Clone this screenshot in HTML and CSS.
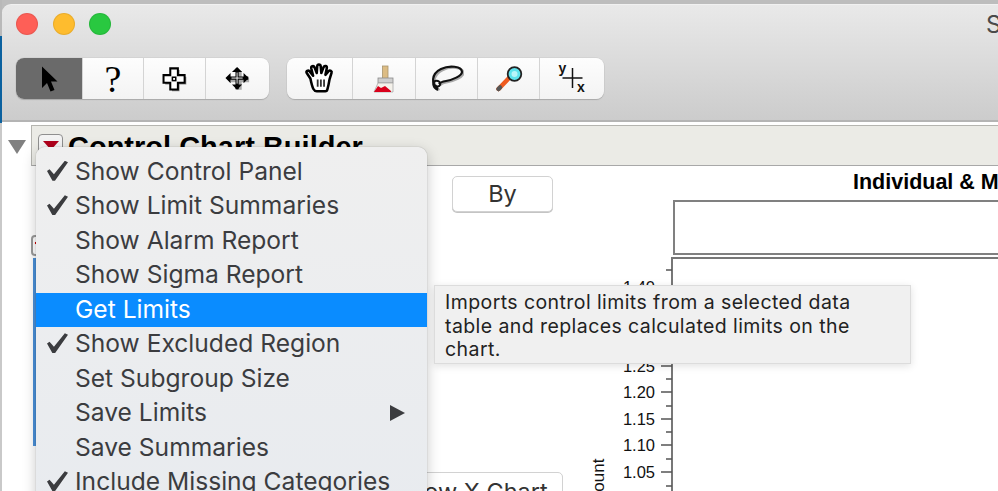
FILE: index.html
```html
<!DOCTYPE html>
<html lang="en">
<head>
<meta charset="utf-8">
<title>Control Chart Builder</title>
<link rel="stylesheet" href="styles.css">
</head>
<body>
<div class="screen">
  <div class="edge"><span class="edge-top"></span><span class="edge-blue"></span><span class="edge-low"></span></div>
  <div class="main">
    <header class="chrome">
      <div class="titlebar">
        <div class="lights"><i class="light red"></i><i class="light yellow"></i><i class="light green"></i></div>
        <span class="wintitle">S</span>
      </div>
      <div class="toolbar">
        <div class="seg seg-a">
          <button class="tool tool-on w66">
            <svg width="24" height="30" viewBox="0 0 24 30"><path d="M5 2.500 5 24 10 19 13.500 27.500 17.500 26 14 17.500 20.500 17.500Z" fill="#000"/></svg>
          </button>
          <button class="tool tool-q w61">?</button>
          <button class="tool w62">
            <svg width="27" height="27" viewBox="0 0 32 32"><path d="M13 6h9v8h8v9h-8v8h-9v-8H5v-9h8Z" fill="#8a8a8a"/><path d="M11 4h9v8h8v9h-8v8h-9v-8H3v-9h8Z" fill="#fff" stroke="#000" stroke-width="2.400"/><rect x="13.500" y="14.500" width="4" height="4" fill="#fff" stroke="#000" stroke-width="1.800"/></svg>
          </button>
          <button class="tool w64">
            <svg width="26" height="26" viewBox="0 0 28 28"><path d="M14 4v20M4 14h20" stroke="#aaa" stroke-width="4" transform="translate(2 1.500)"/><path d="M13 3v22M3 13h22" stroke="#000" stroke-width="3.400"/><path d="M13 7v12M7 13h12" stroke="#fff" stroke-width="1"/><path d="M13 1l5.500 5.500h-11ZM13 25.500l5.500-5.500h-11ZM.5 13 6 7.500v11ZM25.500 13 20 7.500v11Z" fill="#000"/></svg>
          </button>
        </div>
        <div class="seg seg-b">
          <button class="tool w65">
            <svg width="31" height="31" viewBox="0 0 34 34"><path d="M7 17 3 11c-1-2 1.500-3.500 3-2l4 5-2-8c-.5-2.500 2.500-3.500 3.500-1.200L14 11l.5-7.500c.2-2.500 3.500-2.500 3.800 0L19 11l2.500-6.500c1-2.200 4-1.200 3.500 1.200L23.500 13l3.500-4c1.500-1.600 4-.2 3.200 1.800L28 18c-.8 5-1.500 8-2.500 11.500-.3 1-1 1.500-2 1.500H14c-3 0-4.500-2-7-14Z" fill="#fff" stroke="#000" stroke-width="2.800" stroke-linejoin="round"/><path d="M15 18v8M18.500 18v8M22 18v8" stroke="#333" stroke-width="2"/></svg>
          </button>
          <button class="tool w63">
            <svg width="22" height="28" viewBox="0 0 22 28"><rect x="9.500" y="1" width="5.500" height="12.500" fill="#dcbc84" stroke="#a8946e" stroke-width=".8"/><rect x="5" y="13" width="15" height="5" fill="#cfcfcf" stroke="#8a8a8a" stroke-width=".8"/><path d="M5 18h15v9H1Z" fill="#f4f1ea" stroke="#aaa" stroke-width=".8"/><path d="M1 27l4-6 3 2 4-2 6 5v1Z" fill="#d9001b"/></svg>
          </button>
          <button class="tool w62">
            <svg width="34" height="30" viewBox="0 0 34 30"><path d="M8 25C1 20 1 10 11 5c8-4 21-3 21 3 0 4-10 8-16 9-3 .5-6 1.500-7 3" fill="none" stroke="#aaa" stroke-width="2.200" transform="translate(1.500 1.200)"/><path d="M8 25C1 20 1 10 11 5c8-4 21-3 21 3 0 4-10 8-16 9-3 .5-6 1.500-7 3" fill="none" stroke="#111" stroke-width="2.200"/><path d="M8 26c-5-2-6-7-3-9 3-1 6 1 5 4-1 2-4 2-5 0" fill="none" stroke="#111" stroke-width="2"/></svg>
          </button>
          <button class="tool w62">
            <svg width="30" height="30" viewBox="0 0 30 30"><path d="M4.500 25 16 13" stroke="#ee5a1f" stroke-width="4.500" stroke-linecap="round"/><path d="M4.500 25l1.500-1.500" stroke="#555" stroke-width="4.500" stroke-linecap="round"/><circle cx="20.500" cy="10" r="6.800" fill="#5fe3ee" stroke="#222" stroke-width="1.800"/><circle cx="20.500" cy="10" r="3" fill="#b9f5fa"/></svg>
          </button>
          <button class="tool tool-xy w65">
            <svg width="40" height="32" viewBox="0 0 40 32"><path d="M10.500 15h20M20.500 5v20" stroke="#111" stroke-width="1.500"/><text x="6.500" y="10" class="xy-label">y</text><text x="25" y="29" class="xy-label">x</text></svg>
          </button>
        </div>
      </div>
    </header>

    <div class="content">
      <div class="disclosure"><svg width="18" height="14" viewBox="0 0 18 14"><path d="M0 0h18L9 14Z" fill="#808080"/></svg></div>
      <section class="outline">
        <div class="outline-head">
          <span class="red-btn"><i></i></span>
          <h1 class="outline-title">Control Chart Builder</h1>
        </div>
        <div class="outline-body">
          <div class="controls">
            <button class="pill by">By</button>
            <span class="mini-btn"></span>
            <div class="focus-panel"></div>
            <button class="pill xchart">Show X Chart</button>
          </div>
          <div class="chart-col">
            <h2 class="chart-title">Individual &amp; Moving Range Chart</h2>
            <div class="legend-box"></div>
            <svg class="axis" width="408" height="236" viewBox="0 0 408 236">
              <path class="frame" d="M82 236V2H408"/>
              <path class="tick" d="M71 30H82M71 57H82M71 83H82M71 110H82M71 136H82M71 163H82M71 189H82M71 216H82"/>
              <path class="tick" d="M76 14H82M76 43H82M76 70H82M76 97H82M76 123H82M76 150H82M76 176H82M76 203H82M76 230H82"/>
              <text class="tick-label" x="65" y="37">1.40</text>
              <text class="tick-label" x="65" y="116">1.25</text>
              <text class="tick-label" x="65" y="142">1.20</text>
              <text class="tick-label" x="65" y="169">1.15</text>
              <text class="tick-label" x="65" y="195">1.10</text>
              <text class="tick-label" x="65" y="222">1.05</text>
              <text class="axis-name" transform="translate(14 248) rotate(-90)">Count</text>
            </svg>
          </div>
        </div>
      </section>
    </div>
  </div>

  <ul class="menu">
    <li class="item check">Show Control Panel</li>
    <li class="item check">Show Limit Summaries</li>
    <li class="item">Show Alarm Report</li>
    <li class="item">Show Sigma Report</li>
    <li class="item active">Get Limits</li>
    <li class="item check">Show Excluded Region</li>
    <li class="item">Set Subgroup Size</li>
    <li class="item sub">Save Limits</li>
    <li class="item">Save Summaries</li>
    <li class="item check">Include Missing Categories</li>
  </ul>

  <div class="tooltip">Imports control limits from a selected data<br>table and replaces calculated limits on the<br>chart.</div>
</div>
</body>
</html>
```

FILE: styles.css
```css
* { box-sizing: border-box; }
html, body { margin: 0; padding: 0; background: #fff; }
.screen {
  position: relative;
  display: flex;
  width: 998px;
  height: 491px;
  overflow: hidden;
  background: #fff;
  font-family: "Inter", "Liberation Sans", sans-serif;
}
.edge { display: flex; flex-direction: column; width: 2px; flex: none; }
.edge-top { height: 36px; background: #b9b9b9; }
.edge-blue { height: 87px; background: #0b619f; }
.edge-low { flex: 1; background: #c9c9c9; }
.main {
  flex: 1;
  min-width: 0;
  display: flex;
  flex-direction: column;
  padding-top: 4px;
  background: linear-gradient(#bdbdbd 12px, #fff 12px);
}
.chrome {
  height: 118px;
  flex: none;
  border-top: 1px solid #f1f1f1;
  border-bottom: 2px solid #b4b4b4;
  border-top-left-radius: 9px;
  background: linear-gradient(#e9e9e9, #cccccc);
  display: flex;
  flex-direction: column;
}
.titlebar {
  height: 53px;
  flex: none;
  display: flex;
  align-items: flex-start;
  justify-content: space-between;
  padding: 8px 0 0 14px;
}
.lights { display: flex; gap: 14.500px; }
.light { display: block; width: 22px; height: 22px; border-radius: 50%; border: 1px solid rgba(0,0,0,.08); }
.red { background: #fe5f57; }
.yellow { background: #febc2e; }
.green { background: #29c840; }
.wintitle { color: #4a4a4a; font-size: 24px; line-height: 24px; margin-right: -3.500px; }
.toolbar { display: flex; gap: 18px; padding-left: 14px; }
.seg {
  display: flex;
  height: 41px;
  border-radius: 8px;
  overflow: hidden;
  background: linear-gradient(#fdfdfd, #f3f3f3);
  box-shadow: 0 1px 1px #a9a9a9, 0 0 0 .5px #c9c9c9;
}
.seg-a { width: 253px; }
.seg-b { width: 317px; }
.tool {
  flex: none;
  padding: 0;
  border: 0;
  border-left: 1px solid #d4d4d4;
  background: transparent;
  display: flex;
  align-items: center;
  justify-content: center;
  color: #000;
}
.tool:first-child { border-left: 0; }
.w61 { width: 61px; }
.w62 { width: 62px; }
.w63 { width: 63px; }
.w64 { width: 64px; }
.w65 { width: 65px; }
.w66 { width: 66px; }
.tool-on { background: #6a6a6a; }
.tool-q { font: 38px/1 "Liberation Serif", serif; }
.xy-label { font: bold 14px "Liberation Sans", sans-serif; fill: #111; }

.content { flex: 1; min-height: 0; display: flex; padding-top: 3px; }
.disclosure { width: 29px; flex: none; padding: 13px 0 0 6px; }
.outline { flex: 1; min-width: 0; }
.outline-head {
  height: 41px;
  display: flex;
  gap: 5px;
  padding: 8px 0 0 6px;
  background: #ebebe6;
  border-top: 1px solid #b5b5b0;
  border-left: 1px solid #b5b5b0;
  border-bottom: 1px solid #a8a8a8;
  overflow: hidden;
}
.red-btn {
  width: 25px;
  height: 24px;
  flex: none;
  border: 1px solid #8f8f8f;
  border-radius: 4px;
  background: #f3f3f3;
  display: flex;
  justify-content: center;
  padding-top: 6px;
}
.red-btn i { width: 0; height: 0; border-style: solid; border-width: 9px 8px 0; border-color: #b0001b transparent transparent; }
.outline-title {
  margin: -4px 0 0;
  font: bold 29px/34px "Liberation Sans", sans-serif;
  color: #000;
  white-space: nowrap;
}
.outline-body { display: flex; height: 326px; overflow: hidden; }
.controls { width: 559px; flex: none; display: flex; flex-direction: column; align-items: flex-start; }
.pill {
  flex: none;
  background: #fff;
  border: 1px solid #d2d2d2;
  border-radius: 5px;
  box-shadow: 0 1px 0 #c4c4c4;
  font: 23.500px/1 "Inter", "Liberation Sans", sans-serif;
  color: #333;
  padding: 0;
}
.by { width: 101px; height: 36px; margin: 10px 0 0 421px; }
.mini-btn {
  flex: none;
  width: 10px;
  height: 21px;
  margin-top: 23px;
  border: 2px solid #9a9a9a;
  border-radius: 4px;
  background: radial-gradient(circle at 3px 6px, #c00 1.200px, transparent 1.600px);
}
.focus-panel {
  flex: none;
  width: 5px;
  height: 188px;
  margin: 2px 0 0 2px;
  background: #4a90d9;
  border-right: 1px solid #333;
}
.xchart { width: 183px; height: 40px; margin: 26px 0 0 349px; }
.chart-col { flex: 1; min-width: 0; }
.chart-title {
  margin: 4px 0 0;
  padding-left: 263px;
  font: bold 21.500px/24px "Liberation Sans", sans-serif;
  color: #000;
  white-space: nowrap;
}
.legend-box {
  height: 55px;
  margin: 6px -10px 0 83px;
  border: 2px solid #808080;
}
.axis { display: block; margin-top: 1px; }
.frame { fill: none; stroke: #777; stroke-width: 2; }
.tick { fill: none; stroke: #555; stroke-width: 1.500; }
.tick-label { font: 16.500px "Liberation Sans", sans-serif; fill: #111; text-anchor: end; }
.axis-name { font: 17px "Liberation Sans", sans-serif; fill: #111; }

.menu {
  position: absolute;
  left: 36px;
  top: 147px;
  width: 391px;
  height: 370px;
  margin: 0;
  padding: 7.700px 0 0;
  list-style: none;
  border-radius: 9px 9px 0 0;
  background: linear-gradient(#efefef, #e8ebef);
  box-shadow: 0 0 1px rgba(0,0,0,.45), 0 4px 14px rgba(0,0,0,.22);
}
.item {
  position: relative;
  height: 34.500px;
  padding-left: 39px;
  font-size: 24.600px;
  line-height: 33px;
  color: #3b3c3f;
  white-space: nowrap;
}
.check::before {
  content: "";
  position: absolute;
  left: 11px;
  top: 6px;
  width: 21px;
  height: 20px;
  background: #3b3c3f;
  clip-path: polygon(0 52%, 12% 43%, 33% 68%, 85% 0, 100% 8%, 38% 100%, 26% 100%);
}
.active { background: #0a8cff; color: #fff; }
.sub::after {
  content: "";
  position: absolute;
  right: 22px;
  top: 9px;
  border-style: solid;
  border-width: 8px 0 8px 15px;
  border-color: transparent transparent transparent #3b3c3f;
}
.tooltip {
  position: absolute;
  left: 434px;
  top: 285px;
  width: 477px;
  height: 79px;
  padding: 5px 0 0 10px;
  background: #f0f0f0;
  border: 1px solid #dcdcdc;
  box-shadow: 0 2px 8px rgba(0,0,0,.12);
  font-size: 19.500px;
  letter-spacing: .42px;
  line-height: 23.500px;
  color: #222;
  white-space: nowrap;
}
```
